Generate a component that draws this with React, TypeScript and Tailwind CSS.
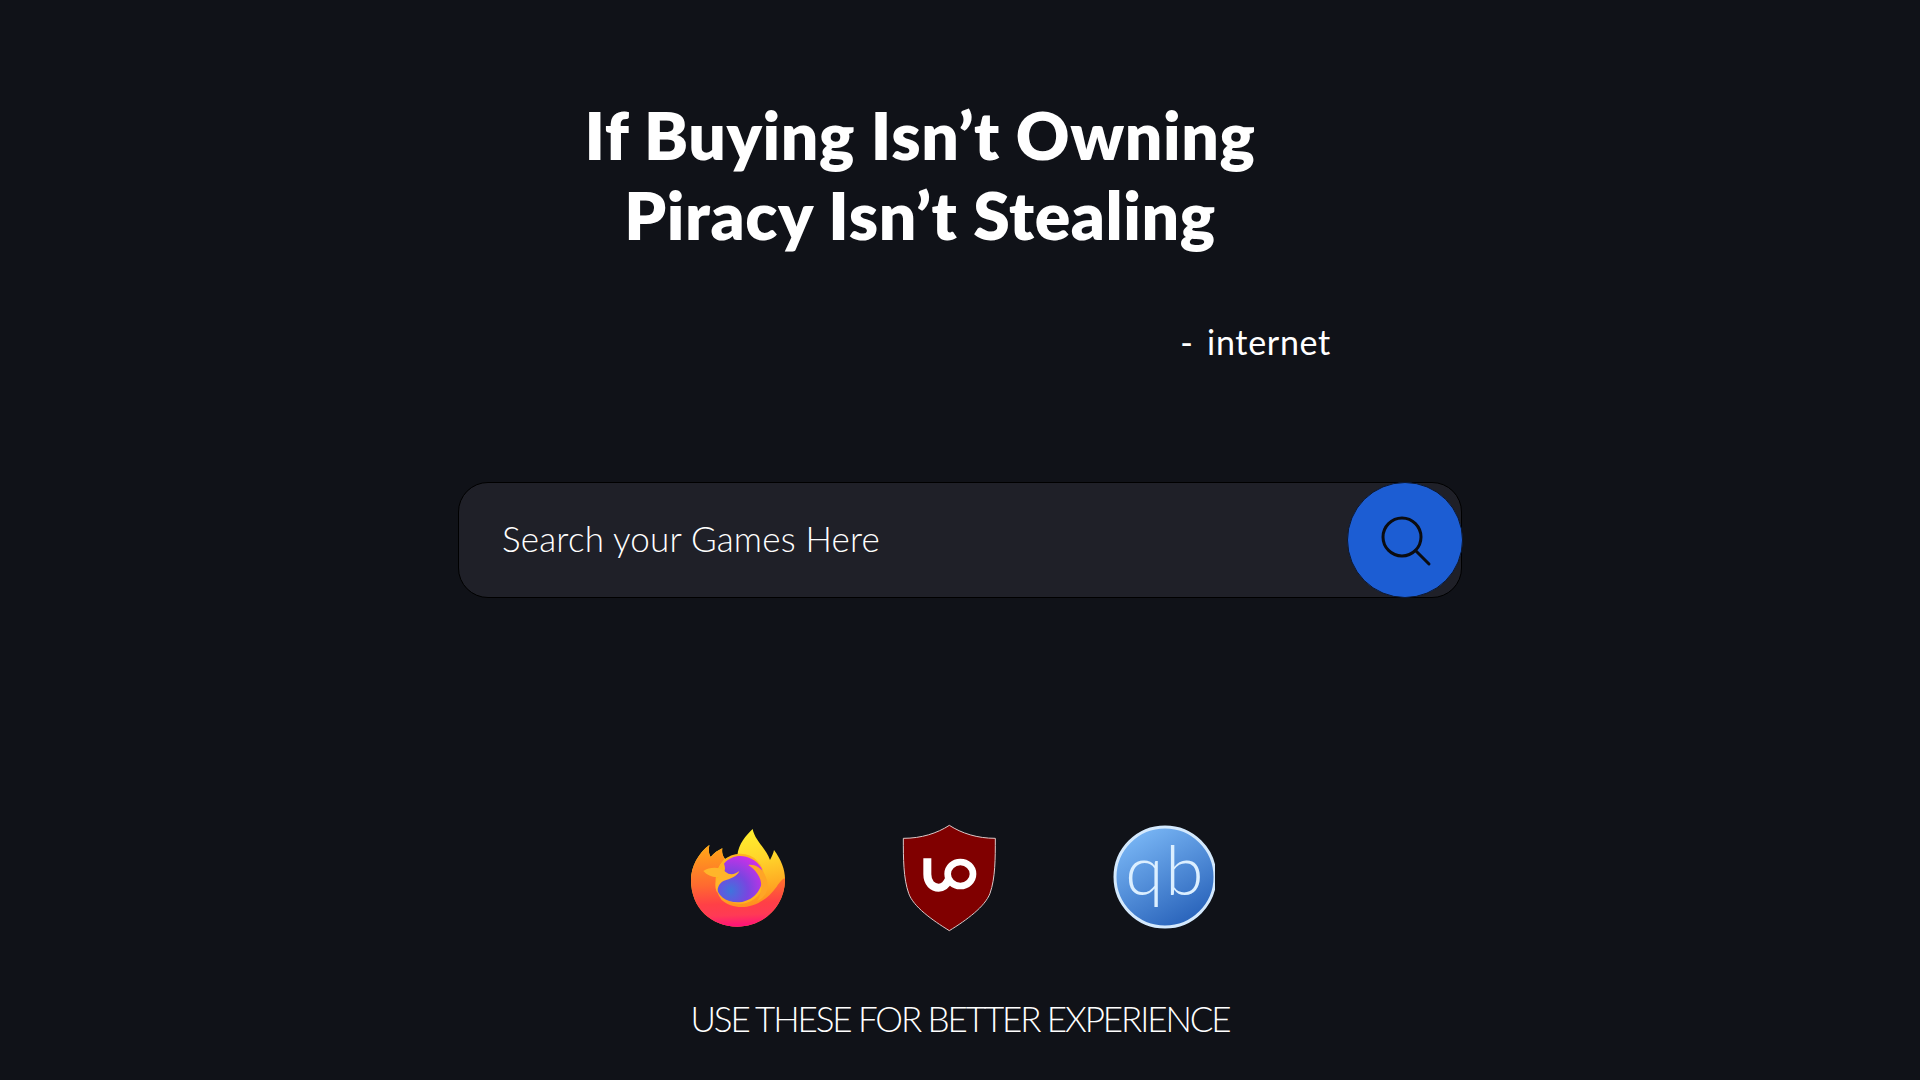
import { useState } from "react";

function SearchGlyph() {
  return (
    <svg width="54" height="54" viewBox="0 0 54 54" fill="none" stroke="#0b0c10" strokeWidth="3" strokeLinecap="round">
      <circle cx="23" cy="23" r="19" />
      <path d="M36.5 36.5 L50 50" />
    </svg>
  );
}

function FirefoxLogo() {
  return (
    <svg width="110" height="120" viewBox="0 0 330 360">
      <defs>
        <linearGradient id="ffBack" x1="0.6" y1="0" x2="0.75" y2="0.8">
          <stop offset="0" stopColor="#fff02e" />
          <stop offset="0.4" stopColor="#ffd42a" />
          <stop offset="1" stopColor="#ff8a1e" />
        </linearGradient>
        <linearGradient id="ffLeft" x1="0.45" y1="0.05" x2="0.5" y2="1">
          <stop offset="0" stopColor="#ffa01a" />
          <stop offset="0.45" stopColor="#ff6a30" />
          <stop offset="0.7" stopColor="#ff4046" />
          <stop offset="0.85" stopColor="#ff3a55" />
          <stop offset="1" stopColor="#ff0f7b" />
        </linearGradient>
        <radialGradient id="ffGlobe" cx="0.3" cy="0.75" r="0.85">
          <stop offset="0" stopColor="#3f74dc" />
          <stop offset="0.45" stopColor="#7a45e0" />
          <stop offset="1" stopColor="#d32ee8" />
        </radialGradient>
      </defs>
      <path
        d="M172 122 C176 85 198 62 218 42 C224 76 258 100 270 135 C276 124 280 115 282 105 C304 135 316 165 315 195 C314 275 250 335 172 335 C95 335 33 280 33 195 C33 155 55 115 88 90 C85 108 87 118 92 126 C102 114 114 106 127 100 C125 112 127 122 135 132 C148 124 160 122 172 122 Z"
        fill="url(#ffBack)"
      />
      <path
        d="M88 90 C85 108 87 118 92 126 C102 114 114 106 127 100 C125 112 127 122 135 132 C105 160 95 215 125 255 C165 290 240 285 290 215 C300 200 310 190 315 190 C316 275 250 335 172 335 C95 335 33 280 33 195 C33 155 55 115 88 90 Z"
        fill="url(#ffLeft)"
      />
      <ellipse cx="181" cy="191" rx="73" ry="75" fill="#ffb41f" />
      <path
        d="M132 146 C160 112 216 116 244 158 C256 190 244 254 178 262 C138 264 110 240 110 214 C110 188 145 180 132 146 Z"
        fill="url(#ffGlobe)"
      />
      <path
        d="M70 168 C90 155 120 155 136 170 C150 182 165 178 178 168 C172 184 150 192 132 197 C120 202 112 214 112 234 C102 214 106 196 116 186 C100 188 82 182 70 168 Z"
        fill="#ffb52a"
      />
      <path
        d="M205 150 C234 146 260 172 263 208 C265 232 250 250 232 258 C246 234 250 200 232 176 C226 166 214 156 205 150 Z"
        fill="#ffa526"
      />
    </svg>
  );
}

function UblockLogo() {
  return (
    <svg width="110" height="120" viewBox="0 0 330 360">
      <path
        d="M178 31 C215 55 262 70 316 70 C316 130 316 190 300 235 C285 275 230 315 178 347 C126 315 70 275 56 235 C40 190 40 130 40 70 C94 70 141 55 178 31 Z"
        fill="#800000"
        stroke="#d9c9c9"
        strokeWidth="3"
      />
      <path
        d="M112 130 V178 C112 204 128 218 146 218 C160 218 170 208 176 194"
        fill="none"
        stroke="#ffffff"
        strokeWidth="24"
      />
      <ellipse cx="211" cy="177" rx="38" ry="36" fill="none" stroke="#ffffff" strokeWidth="20" />
    </svg>
  );
}

function QbLogo() {
  return (
    <svg width="110" height="120" viewBox="0 0 330 360">
      <defs>
        <linearGradient id="qbFill" x1="0.2" y1="0.05" x2="0.75" y2="1">
          <stop offset="0" stopColor="#79b6f5" />
          <stop offset="1" stopColor="#2660b8" />
        </linearGradient>
      </defs>
      <circle cx="180" cy="186" r="150" fill="url(#qbFill)" stroke="#d4e9fd" strokeWidth="9" />
      <text x="181" y="240" textAnchor="middle" letterSpacing="6" fontFamily="Lato, sans-serif" fontWeight="300" fontSize="208" fill="#dcefff">
        qb
      </text>
    </svg>
  );
}

export default function App() {
  const [query, setQuery] = useState("");

  return (
    <div className="min-h-screen w-full bg-[#101218] text-white font-['Lato',sans-serif] flex flex-col items-center pt-[95px] overflow-hidden">
      <div className="w-[1004px] flex flex-col">
        <h1 className="text-[66px] leading-[80px] font-extrabold text-center tracking-[0.6px] mr-[80px]">
          <div>If Buying Isn’t Owning</div>
          <div>Piracy Isn’t Stealing</div>
        </h1>
        <p className="self-end text-[34px] leading-[44px] mt-[65px] mr-[131px] tracking-[0.7px] [word-spacing:4px]">- internet</p>

        <div className="mt-[118px] h-[116px] rounded-[30px] bg-[#1f2028] border border-[#000000] flex items-center justify-between">
          <input
            value={query}
            onChange={(e) => setQuery(e.target.value)}
            placeholder="Search your Games Here"
            className="flex-1 ml-[43px] -mt-[3px] bg-transparent outline-none text-[35px] font-light tracking-[0.2px] placeholder:text-white placeholder:opacity-100"
          />
          <button className="w-[116px] h-[116px] -mr-[2px] rounded-full bg-[#1c5dd3] border border-[#0d1830] flex items-center justify-center pl-[2px] pt-[2px]">
            <SearchGlyph />
          </button>
        </div>

        <div className="mt-[217px] flex pl-[222px]">
          <FirefoxLogo />
          <div className="ml-[100px]">
            <UblockLogo />
          </div>
          <div className="ml-[105px]">
            <QbLogo />
          </div>
        </div>

        <p className="mt-[61px] text-center text-[35px] leading-[44px] font-light tracking-[-2.1px]">USE THESE FOR BETTER EXPERIENCE</p>
      </div>
    </div>
  );
}
